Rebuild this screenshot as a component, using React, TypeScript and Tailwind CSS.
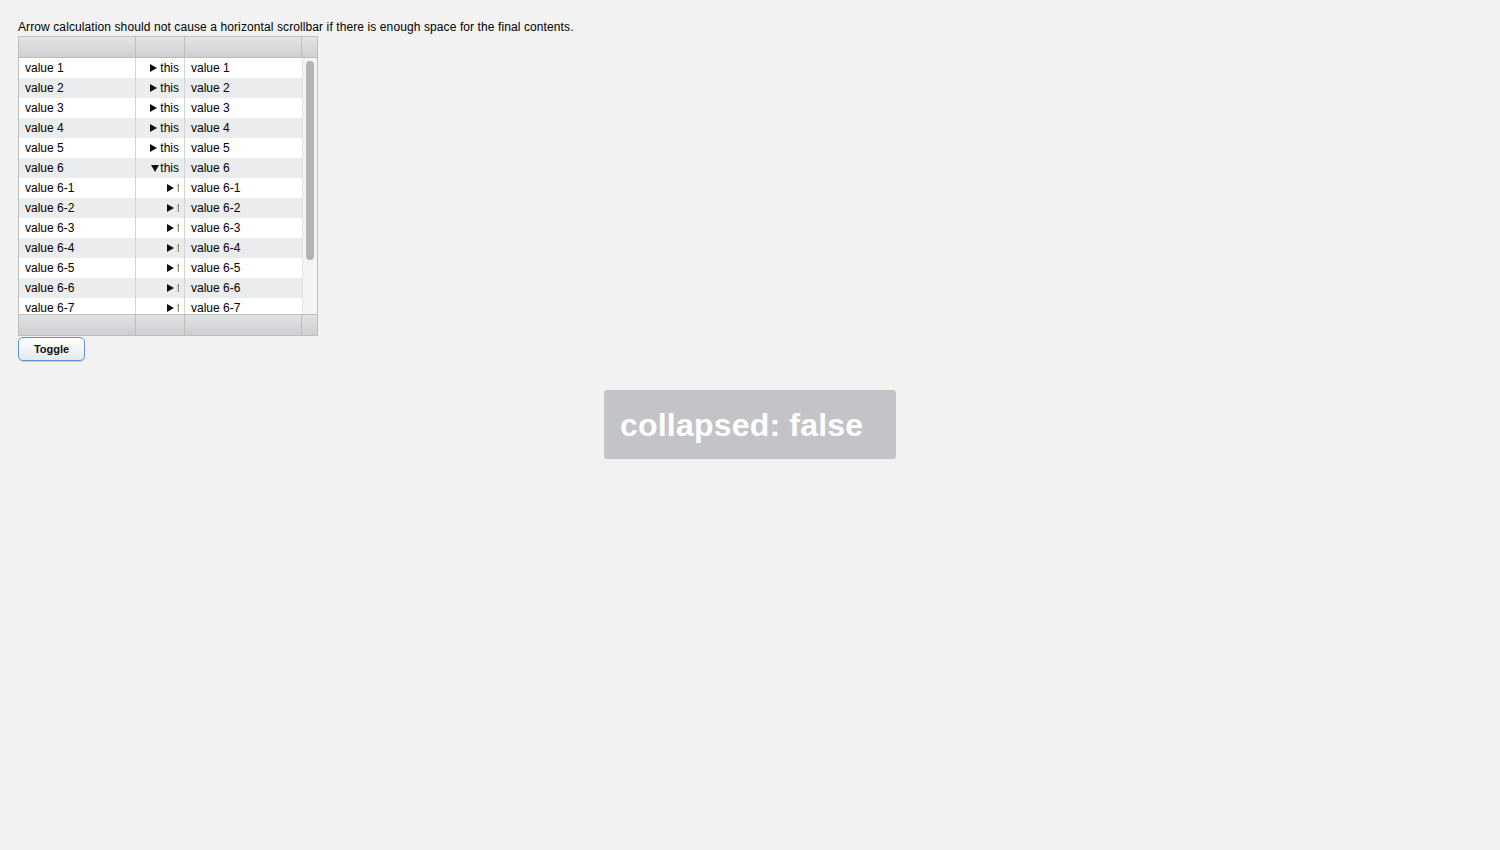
import React from "react";

type Row = { label: string; child?: boolean; expanded?: boolean };

const rows: Row[] = [
  { label: "value 1" },
  { label: "value 2" },
  { label: "value 3" },
  { label: "value 4" },
  { label: "value 5" },
  { label: "value 6", expanded: true },
  ...[1, 2, 3, 4, 5, 6, 7, 8, 9].map((n) => ({ label: `value 6-${n}`, child: true })),
];

function Arrow({ down }: { down?: boolean }) {
  if (down) {
    return (
      <svg width="8" height="7" viewBox="0 0 8 7" className="mr-[1px]">
        <path d="M0 0 L8 0 L4 7 Z" fill="#111" />
      </svg>
    );
  }
  return (
    <svg width="7" height="8" viewBox="0 0 7 8" className="mr-[3px]">
      <path d="M0 0 L7 4 L0 8 Z" fill="#111" />
    </svg>
  );
}

export default function App() {
  return (
    <div
      className="min-h-[850px] bg-[#f2f2f2] pt-[19px] pl-[18px] text-black"
      style={{ fontFamily: '"Liberation Sans", Arial, sans-serif' }}
    >
      <p className="text-[12px] leading-[17px] tracking-[0.1px]">
        Arrow calculation should not cause a horizontal scrollbar if there is enough space for the final contents.
      </p>

      {/* grid */}
      <div className="w-[300px] border border-[#bdbdbd] text-[12px]">
        <div className="flex h-[21px] border-b border-[#bdbdbd] bg-gradient-to-b from-[#e3e4e6] to-[#cfd0d3]">
          <div className="w-[117px] border-r border-[#bdbdbd]" />
          <div className="w-[49px] border-r border-[#bdbdbd]" />
          <div className="w-[117px] border-r border-[#bdbdbd]" />
          <div className="flex-1" />
        </div>

        <div className="flex h-[256px] overflow-hidden bg-white">
          <div className="w-[283px]">
            {rows.map((r, i) => (
              <div
                key={r.label}
                className={`flex h-[20px] items-center ${i % 2 === 1 ? "bg-[#ebeced]" : "bg-white"}`}
              >
                <div className="w-[117px] border-r border-[#d4d4d4] h-full flex items-center pl-[6px]">
                  {r.label}
                </div>
                <div className="w-[49px] border-r border-[#d4d4d4] h-full flex items-center justify-end pr-[5px]">
                  <Arrow down={r.expanded} />
                  {r.child ? (
                    <span className="w-[2px] overflow-hidden whitespace-nowrap text-[#8a7a40]">this</span>
                  ) : (
                    <span>this</span>
                  )}
                </div>
                <div className="w-[117px] h-full flex items-center pl-[6px]">{r.label}</div>
              </div>
            ))}
          </div>
          <div className="flex-1 bg-[#f4f4f4] border-l border-[#e4e4e4] pt-[3px] flex justify-center">
            <div className="w-[8px] h-[199px] rounded-full bg-[#b3b3b3]" />
          </div>
        </div>

        <div className="flex h-[21px] border-t border-[#bdbdbd] bg-gradient-to-b from-[#e1e2e4] to-[#cdced1]">
          <div className="w-[117px] border-r border-[#bdbdbd]" />
          <div className="w-[49px] border-r border-[#bdbdbd]" />
          <div className="w-[117px] border-r border-[#bdbdbd]" />
          <div className="flex-1" />
        </div>
      </div>

      <button className="block mt-[1px] h-[24px] w-[67px] rounded-[5px] border border-[#5f93d0] bg-gradient-to-b from-[#ffffff] to-[#e6e8eb] text-[11px] font-bold text-[#111] shadow-[0_1px_1px_rgba(0,0,0,0.15)]">
        Toggle
      </button>

      <div className="flex justify-center pr-[18px] mt-[29px]">
        <div className="w-[292px] h-[69px] rounded-[3px] bg-[#c3c4c7] pl-[16px] flex items-center">
          <span className="text-[32px] font-bold text-white tracking-[0.2px]">collapsed: false</span>
        </div>
      </div>
    </div>
  );
}
